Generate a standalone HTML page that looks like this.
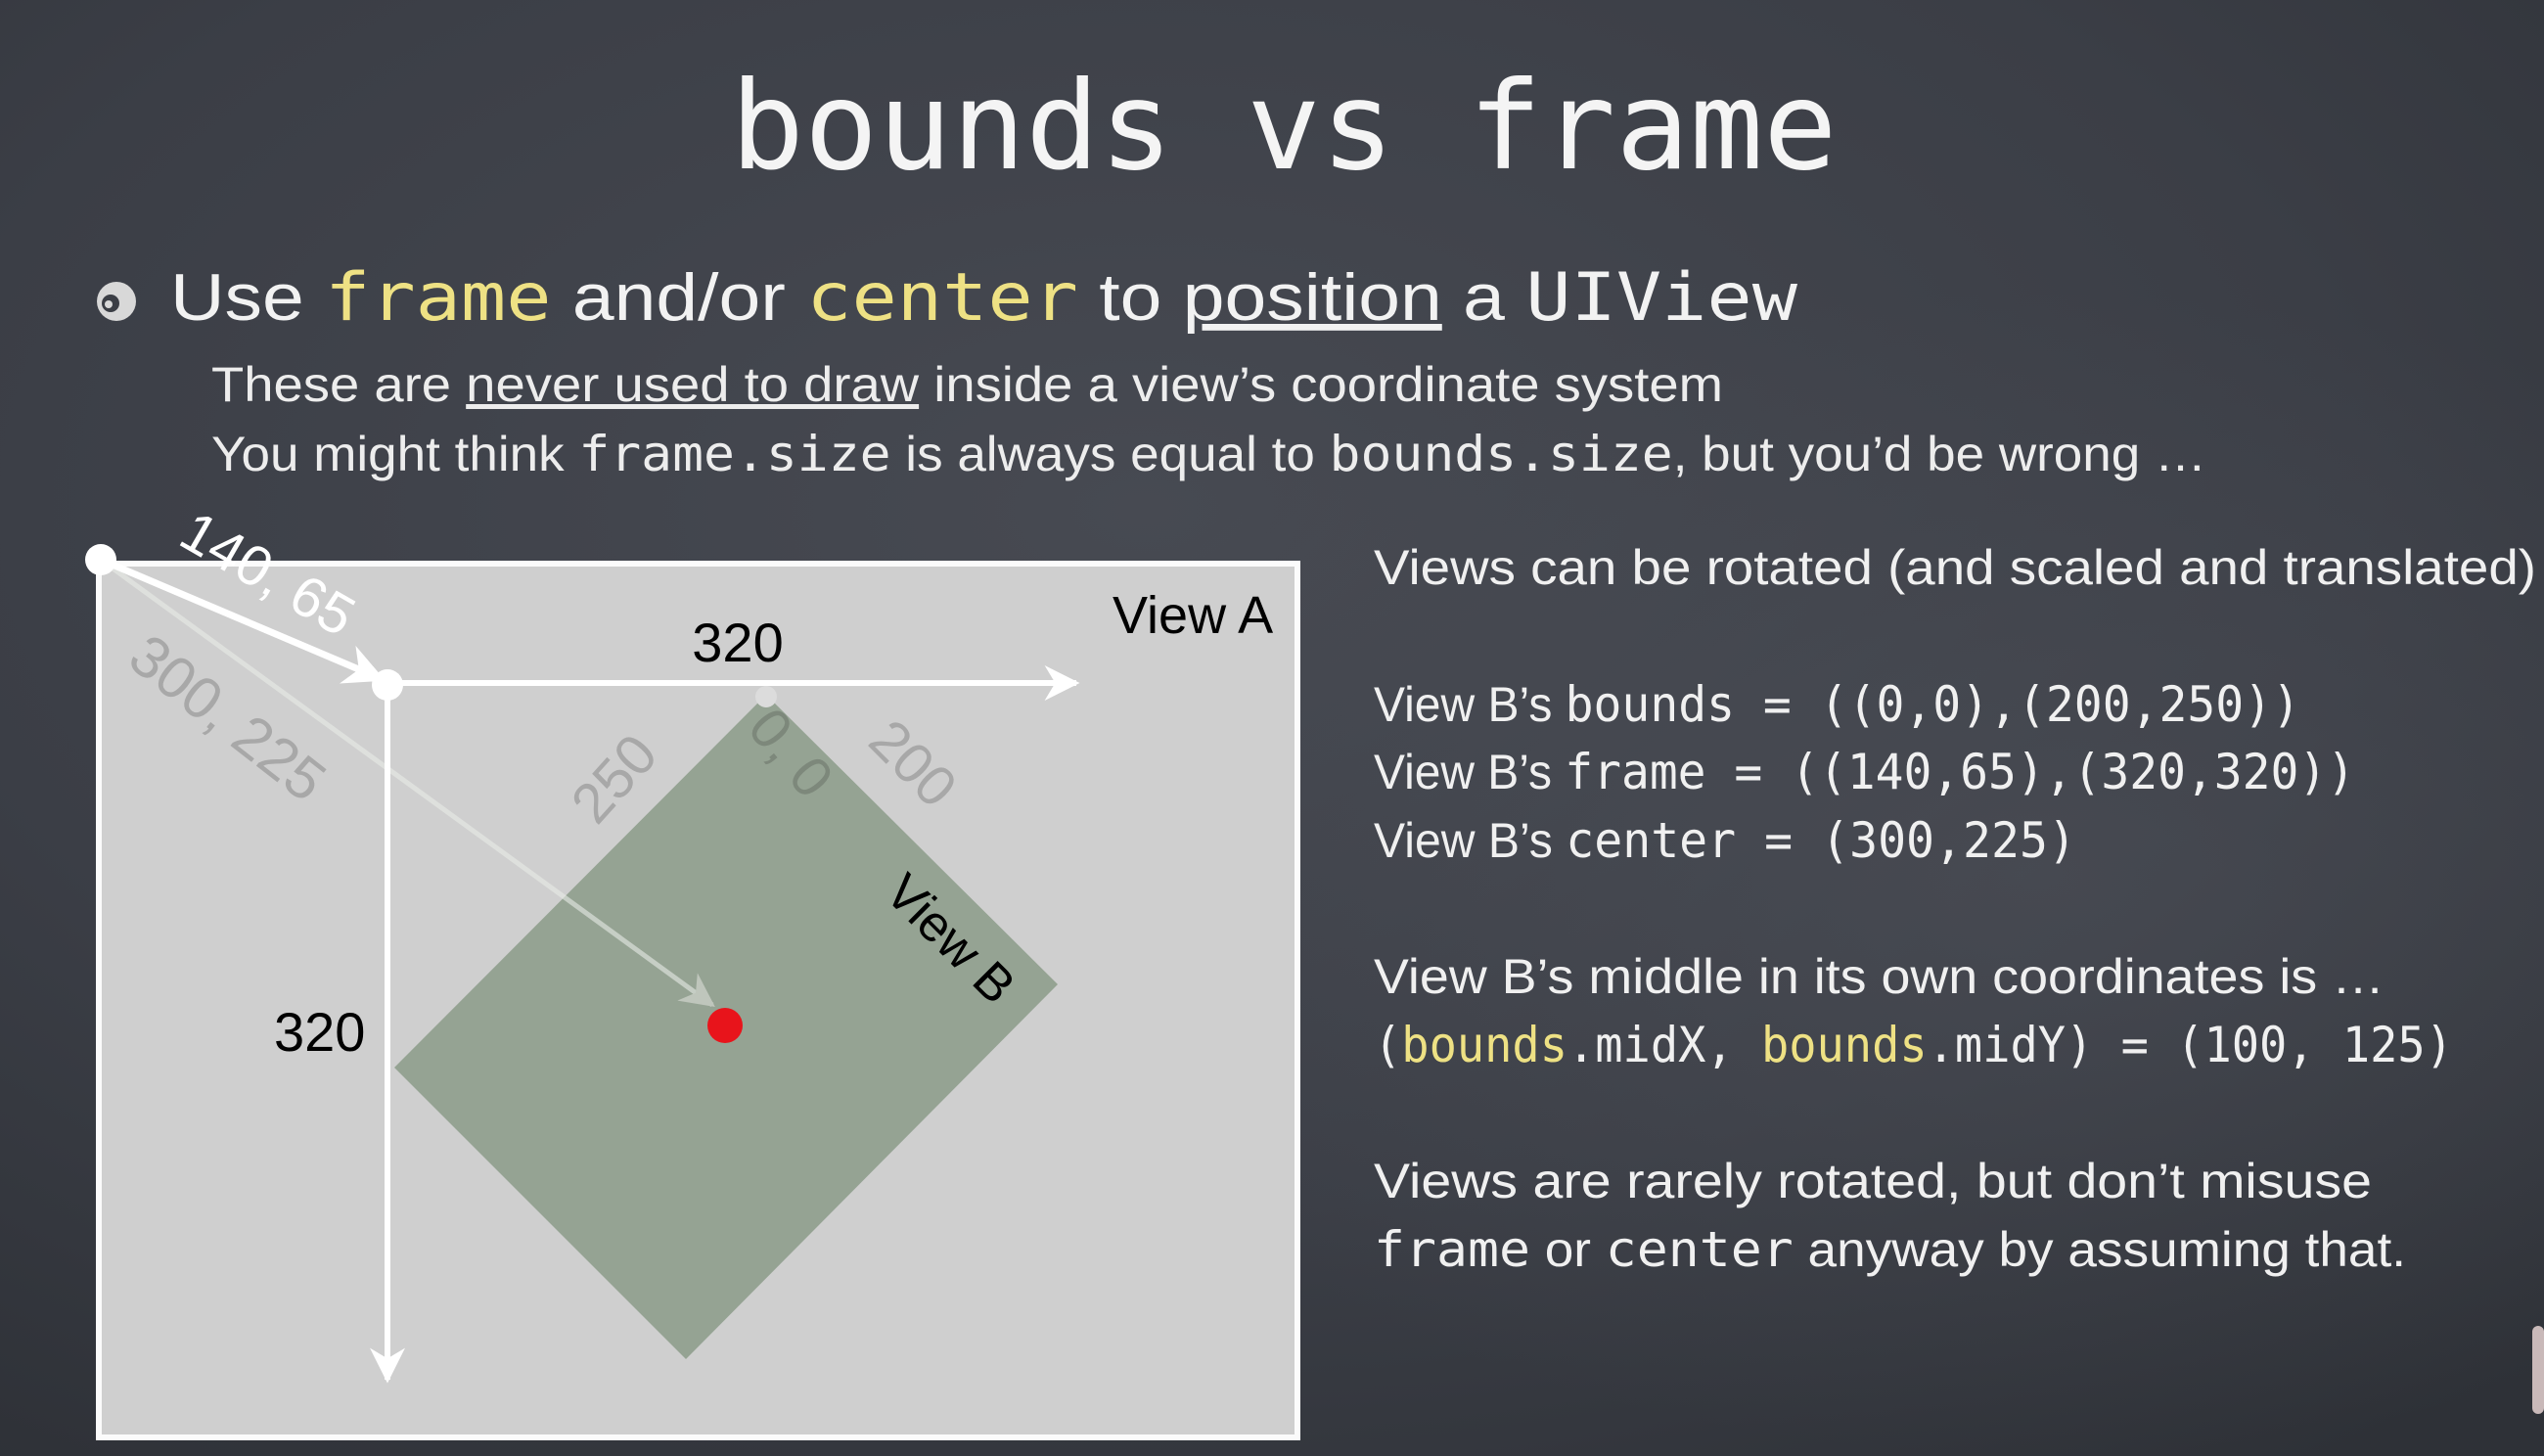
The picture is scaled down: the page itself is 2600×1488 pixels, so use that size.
<!DOCTYPE html>
<html><head><meta charset="utf-8"><style>
html,body{margin:0;padding:0;background:#3a3d44;}
svg{display:block}
.h{font-family:"Liberation Sans",sans-serif;}
.m{font-family:"DejaVu Sans Mono","Liberation Mono",monospace;}
</style></head><body>
<svg width="2600" height="1488" viewBox="0 0 2600 1488" xmlns="http://www.w3.org/2000/svg">
<defs>
<radialGradient id="bg" cx="0.45" cy="0.35" r="0.8">
<stop offset="0" stop-color="#474a52"/><stop offset="0.6" stop-color="#3b3e46"/><stop offset="1" stop-color="#2e3137"/>
</radialGradient>
<radialGradient id="bg2" cx="0.8" cy="0.6" r="0.4">
<stop offset="0" stop-color="#50535b" stop-opacity="0.5"/><stop offset="1" stop-color="#50535b" stop-opacity="0"/>
</radialGradient>
<marker id="aw" viewBox="0 0 10 10" refX="9" refY="5" markerWidth="6" markerHeight="6" orient="auto"><path d="M0,0 L10,5 L0,10 L3,5 Z" fill="#fff"/></marker>
<marker id="ag" viewBox="0 0 10 10" refX="9" refY="5" markerWidth="7" markerHeight="7" orient="auto"><path d="M0,0 L10,5 L0,10 L3,5 Z" fill="#bfc6bc"/></marker>
</defs>
<rect width="2600" height="1488" fill="url(#bg)"/>
<rect width="2600" height="1488" fill="url(#bg2)"/>

<text x="1312" y="172" text-anchor="middle" class="m" font-size="125" fill="#f4f4f4" textLength="1131" lengthAdjust="spacingAndGlyphs">bounds vs frame</text>

<circle cx="119" cy="308" r="20" fill="#d8d8d8"/><circle cx="113" cy="310" r="9" fill="#3b3e45"/><circle cx="111" cy="311" r="4" fill="#d8d8d8"/>

<text x="174" y="327" font-size="68" fill="#f2f2f2" class="h" textLength="1663" lengthAdjust="spacingAndGlyphs">Use <tspan class="m" fill="#eee184">frame</tspan> and/or <tspan class="m" fill="#eee184">center</tspan> to <tspan text-decoration="underline">position</tspan> a <tspan class="m">UIView</tspan></text>
<text x="216" y="410" font-size="50" fill="#ededed" class="h" textLength="1545" lengthAdjust="spacingAndGlyphs">These are <tspan text-decoration="underline">never used to draw</tspan> inside a view’s coordinate system</text>
<text x="216" y="481" font-size="50" fill="#ededed" class="h" textLength="2039" lengthAdjust="spacingAndGlyphs">You might think <tspan class="m">frame.size</tspan> is always equal to <tspan class="m">bounds.size</tspan>, but you’d be wrong …</text>

<rect x="101" y="576" width="1225" height="893" fill="#cfcfcf" stroke="#fbfbfb" stroke-width="6"/>
<polygon points="783,710 1081,1006 701,1389 403,1091" fill="#95a393"/>
<circle cx="741" cy="1048" r="18" fill="#e8141b"/>
<line x1="103" y1="572" x2="728" y2="1027" stroke="#e8ebe6" stroke-opacity="0.6" stroke-width="5" marker-end="url(#ag)"/>
<line x1="103" y1="572" x2="390" y2="694" stroke="#fff" stroke-width="7" marker-end="url(#aw)"/>
<line x1="396" y1="698" x2="1100" y2="698" stroke="#fff" stroke-width="6" marker-end="url(#aw)"/>
<line x1="396" y1="698" x2="396" y2="1410" stroke="#fff" stroke-width="6" marker-end="url(#aw)"/>
<circle cx="103" cy="572" r="16" fill="#fff"/>
<circle cx="396" cy="700" r="16" fill="#fff"/>
<circle cx="783" cy="712" r="11" fill="#dcdcdc"/>

<g class="h" font-size="54">
<text transform="translate(180,555) rotate(30)" fill="#fff" font-size="58">140, 65</text>
<text transform="translate(128,678) rotate(38)" fill="#a8a8a8" font-size="60">300, 225</text>
<text x="754" y="676" text-anchor="middle" fill="#000" font-size="56">320</text>
<text x="1137" y="647" fill="#000" font-size="54">View A</text>
<text x="280" y="1074" fill="#000" font-size="56">320</text>
<text transform="translate(610,845) rotate(-48)" fill="#a8a8a8" font-size="58">250</text>
<text transform="translate(762,745) rotate(50)" fill="#7d887b" font-size="58">0, 0</text>
<text transform="translate(885,760) rotate(45)" fill="#a8a8a8" font-size="58">200</text>
<text transform="translate(902,915) rotate(45)" fill="#000" font-size="52">View B</text>
</g>

<g class="h" font-size="50" fill="#f0f0f0">
<text x="1404" y="597" textLength="1188" lengthAdjust="spacingAndGlyphs">Views can be rotated (and scaled and translated)</text>
<text x="1404" y="737" textLength="947" lengthAdjust="spacingAndGlyphs">View B’s <tspan class="m">bounds = ((0,0),(200,250))</tspan></text>
<text x="1404" y="806" textLength="1003" lengthAdjust="spacingAndGlyphs">View B’s <tspan class="m">frame = ((140,65),(320,320))</tspan></text>
<text x="1404" y="876" textLength="718" lengthAdjust="spacingAndGlyphs">View B’s <tspan class="m">center = (300,225)</tspan></text>
<text x="1404" y="1015" textLength="1033" lengthAdjust="spacingAndGlyphs">View B’s middle in its own coordinates is …</text>
<text x="1404" y="1085" class="m" textLength="1103" lengthAdjust="spacingAndGlyphs">(<tspan fill="#eee184">bounds</tspan>.midX, <tspan fill="#eee184">bounds</tspan>.midY) = (100, 125)</text>
<text x="1404" y="1224" textLength="1020" lengthAdjust="spacingAndGlyphs">Views are rarely rotated, but don’t misuse</text>
<text x="1404" y="1294" textLength="1055" lengthAdjust="spacingAndGlyphs"><tspan class="m">frame</tspan> or <tspan class="m">center</tspan> anyway by assuming that.</text>
</g>
<rect x="2588" y="1355" width="12" height="90" rx="6" fill="#c9b9b9"/>
</svg>
</body></html>
